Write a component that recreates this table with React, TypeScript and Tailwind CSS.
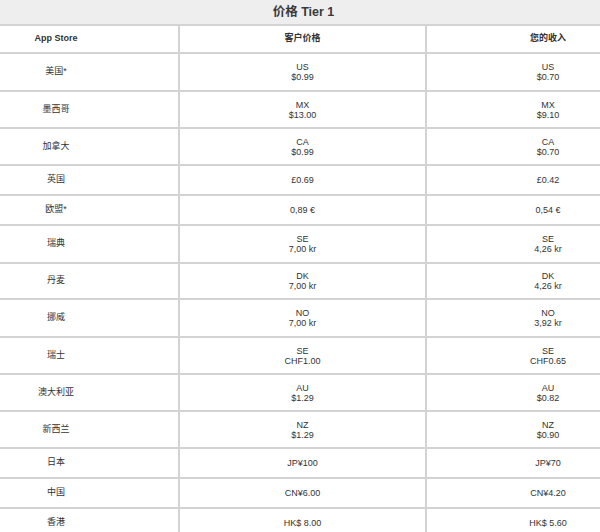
import React from "react";

type Row = { name: string; h: number; a: string[]; b: string[] };

const rows: Row[] = [
  { name: "美国*", h: 36, a: ["US", "$0.99"], b: ["US", "$0.70"] },
  { name: "墨西哥", h: 35, a: ["MX", "$13.00"], b: ["MX", "$9.10"] },
  { name: "加拿大", h: 35, a: ["CA", "$0.99"], b: ["CA", "$0.70"] },
  { name: "英国", h: 28, a: ["£0.69"], b: ["£0.42"] },
  { name: "欧盟*", h: 28, a: ["0,89 €"], b: ["0,54 €"] },
  { name: "瑞典", h: 36, a: ["SE", "7,00 kr"], b: ["SE", "4,26 kr"] },
  { name: "丹麦", h: 34, a: ["DK", "7,00 kr"], b: ["DK", "4,26 kr"] },
  { name: "挪威", h: 36, a: ["NO", "7,00 kr"], b: ["NO", "3,92 kr"] },
  { name: "瑞士", h: 35, a: ["SE", "CHF1.00"], b: ["SE", "CHF0.65"] },
  { name: "澳大利亚", h: 35, a: ["AU", "$1.29"], b: ["AU", "$0.82"] },
  { name: "新西兰", h: 35, a: ["NZ", "$1.29"], b: ["NZ", "$0.90"] },
  { name: "日本", h: 28, a: ["JP¥100"], b: ["JP¥70"] },
  { name: "中国", h: 28, a: ["CN¥6.00"], b: ["CN¥4.20"] },
  { name: "香港", h: 28, a: ["HK$ 8.00"], b: ["HK$ 5.60"] },
];

function Lines({ lines }: { lines: string[] }) {
  return (
    <>
      {lines.map((l, i) => (
        <span key={i} className="block leading-[10px]">
          {l}
        </span>
      ))}
    </>
  );
}

export default function App() {
  return (
    <div
      className="w-[600px] h-[532px] overflow-hidden bg-white text-[#333333]"
      style={{ fontFamily: '"Liberation Sans", "Noto Sans CJK SC", sans-serif' }}
    >
      <div className="ml-[-66px] w-[739px]">
        <div className="h-[26px] bg-[#eeeeee] border-b-2 border-[#d3d3d3] flex items-center justify-center text-[12.5px] font-bold text-[#3a3a3a]">
          价格 Tier 1
        </div>
        <div className="flex h-[28px] border-b-2 border-[#d3d3d3] text-[9px] font-bold">
          <div className="w-[244px] flex items-center justify-center">App Store</div>
          <div className="w-[247px] border-l-2 border-[#d3d3d3] flex items-center justify-center">客户价格</div>
          <div className="w-[246px] border-l-2 border-r-2 border-[#d3d3d3] flex items-center justify-center">您的收入</div>
        </div>
        {rows.map((r) => (
          <div
            key={r.name}
            className="flex border-b-2 border-[#d3d3d3] text-[9px]"
            style={{ height: r.h + 2 }}
          >
            <div className="w-[244px] flex items-center justify-center">{r.name}</div>
            <div className="w-[247px] border-l-2 border-[#d3d3d3] flex flex-col items-center justify-center">
              <Lines lines={r.a} />
            </div>
            <div className="w-[246px] border-l-2 border-r-2 border-[#d3d3d3] flex flex-col items-center justify-center">
              <Lines lines={r.b} />
            </div>
          </div>
        ))}
      </div>
    </div>
  );
}
